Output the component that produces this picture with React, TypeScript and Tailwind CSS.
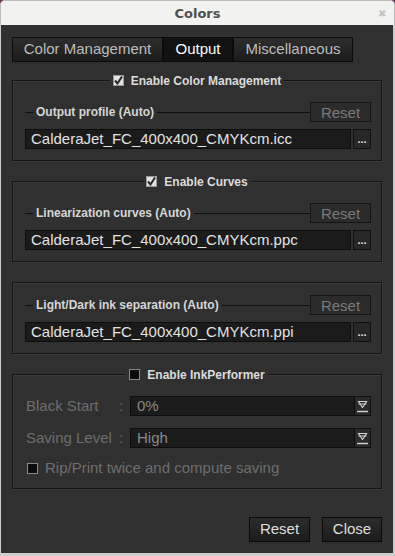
import type { ReactNode } from 'react';

const sans = "font-['Liberation_Sans',Arial,sans-serif]";

const CheckBox = ({ checked }: { checked: boolean }) => (
    checked ? (
        <div className="w-[11px] h-[11px] bg-[#e2e2e2] border border-[#9a9a9a] flex items-center justify-center">
            <svg width="9" height="9" viewBox="0 0 9 9">
                <path d="M1 4.5 L3.5 7.5 L8 0.5" stroke="#2a2a2a" strokeWidth="2" fill="none" />
            </svg>
        </div>
    ) : (
        <div className="w-[11px] h-[11px] bg-[#0b0b0b] border border-[#8a8a8a]" />
    )
);

const Group = ({ title, checked, className, children }: { title?: string; checked?: boolean; className?: string; children: ReactNode }) => (
    <div className={`relative border border-[#141414] shadow-[inset_1px_1px_0_#3b3b3b,1px_1px_0_#3b3b3b] pl-[12px] pr-[10px] pb-[11px] ${className ?? ''}`}>
        {title && (
            <div className="absolute left-0 right-0 -top-[8px] flex justify-center">
                <div className="flex items-center gap-[7px] bg-[#303030] px-[3px] h-[15px]">
                    <CheckBox checked={!!checked} />
                    <span className="text-[12px] font-bold text-[#dcdcdc] leading-none">{title}</span>
                </div>
            </div>
        )}
        {children}
    </div>
);

const FileRow = ({ label, file }: { label: string; file: string }) => (
    <>
        <div className="flex items-center h-[20px]">
            <div className="w-[8px] h-px bg-[#0f0f0f]" />
            <span className="px-[3px] text-[12px] font-bold text-[#d6d6d6] leading-none">{label}</span>
            <div className="flex-1 h-px bg-[#0f0f0f]" />
            <button className="w-[61px] h-[20px] bg-[#2b2b2b] border border-[#141414] text-[15px] text-[#7a7a7a] leading-none">Reset</button>
        </div>
        <div className="flex gap-[2px] mt-[7px]">
            <div className="flex-1 h-[20px] bg-[#1b1b1b] border border-[#0e0e0e] text-[15px] text-[#e2e2e2] leading-[18px] pl-[5px]">{file}</div>
            <button className="w-[18px] h-[20px] bg-[#272727] border border-[#101010] text-[11px] font-bold text-[#e0e0e0] leading-none">...</button>
        </div>
    </>
);

const SelectRow = ({ label, value, className }: { label: string; value: string; className?: string }) => (
    <div className={`flex items-center h-[20px] ${className ?? ''}`}>
        <span className="w-[94px] pl-[1px] text-[15px] text-[#6e6e6e]">{label}</span>
        <span className="w-[11px] text-[15px] text-[#6e6e6e]">:</span>
        <div className="flex-1 h-[20px] flex bg-[#1b1b1b] border border-[#0e0e0e]">
            <span className="flex-1 pl-[6px] text-[15px] text-[#8a8a8a] leading-[18px]">{value}</span>
            <div className="w-[16px] bg-[#2a2a2a] border-l border-[#0e0e0e] flex items-center justify-center">
                <svg width="11" height="13" viewBox="0 0 11 13">
                    <path d="M1.5 1.5 H9.5 L5.5 7.5 Z" stroke="#cfcfcf" strokeWidth="1.2" fill="none" />
                    <path d="M1.5 4 H9.5" stroke="#cfcfcf" strokeWidth="1" />
                    <path d="M0 11.5 H11" stroke="#cfcfcf" strokeWidth="1.5" />
                </svg>
            </div>
        </div>
    </div>
);

const App = () => {
    const tabs = [
        { name: 'Color Management', w: 'w-[151px]', active: false },
        { name: 'Output', w: 'w-[70px]', active: true },
        { name: 'Miscellaneous', w: 'w-[120px]', active: false },
    ];

    return (
        <div className={`w-[395px] h-[556px] bg-[#6e2f55] ${sans}`}>
            <div className="w-full h-full rounded-t-[5px] overflow-hidden bg-[#cdcdcd] flex flex-col">
                <div className="h-[25px] shrink-0 bg-[#f2f2f0] border-x border-t border-[#bdbdbd] rounded-t-[5px] relative flex items-center justify-center">
                    <span className="text-[13px] font-bold text-[#4f4f4f] font-['DejaVu_Sans',sans-serif] mt-[2px]">Colors</span>
                    <span className="absolute right-[8px] top-[8px] text-[10px] text-[#c2c2c2] leading-none">✖</span>
                </div>

                <div className="h-[528px] ml-[1px] mr-[2px] bg-[#303030] px-[11px] pt-[12px]">
                    {/* tabs */}
                    <div className="flex h-[25px]">
                        {tabs.map((t) => (
                            <div
                                key={t.name}
                                className={`${t.w} h-full border border-[#0b0b0b] flex items-center justify-center text-[15px] ${t.active ? 'bg-[#121212] text-white' : 'bg-gradient-to-b from-[#2e2e2e] to-[#1c1c1c] text-[#bdbdbd]'}`}
                            >
                                {t.name}
                            </div>
                        ))}
                    </div>

                    <Group title="Enable Color Management" checked className="mt-[18px] pt-[21px]">
                        <FileRow label="Output profile (Auto)" file="CalderaJet_FC_400x400_CMYKcm.icc" />
                    </Group>

                    <Group title="Enable Curves" checked className="mt-[20px] pt-[21px]">
                        <FileRow label="Linearization curves (Auto)" file="CalderaJet_FC_400x400_CMYKcm.ppc" />
                    </Group>

                    <Group className="mt-[20px] pt-[12px]">
                        <FileRow label="Light/Dark ink separation (Auto)" file="CalderaJet_FC_400x400_CMYKcm.ppi" />
                    </Group>

                    <Group title="Enable InkPerformer" checked={false} className="mt-[20px] pt-[21px]">
                        <SelectRow label="Black Start" value="0%" />
                        <SelectRow label="Saving Level" value="High" className="mt-[12px]" />
                        <div className="flex items-center gap-[7px] mt-[11px] pl-[2px] h-[18px]">
                            <CheckBox checked={false} />
                            <span className="text-[15px] text-[#6e6e6e]">Rip/Print twice and compute saving</span>
                        </div>
                    </Group>

                    <div className="flex justify-end gap-[12px] mt-[28px]">
                        <button className="w-[61px] h-[25px] bg-gradient-to-b from-[#2c2c2c] to-[#1c1c1c] border border-[#0b0b0b] text-[15px] text-[#dedede]">Reset</button>
                        <button className="w-[60px] h-[25px] bg-gradient-to-b from-[#2c2c2c] to-[#1c1c1c] border border-[#0b0b0b] text-[15px] text-[#dedede]">Close</button>
                    </div>
                </div>
            </div>
        </div>
    );
};

export default App;
